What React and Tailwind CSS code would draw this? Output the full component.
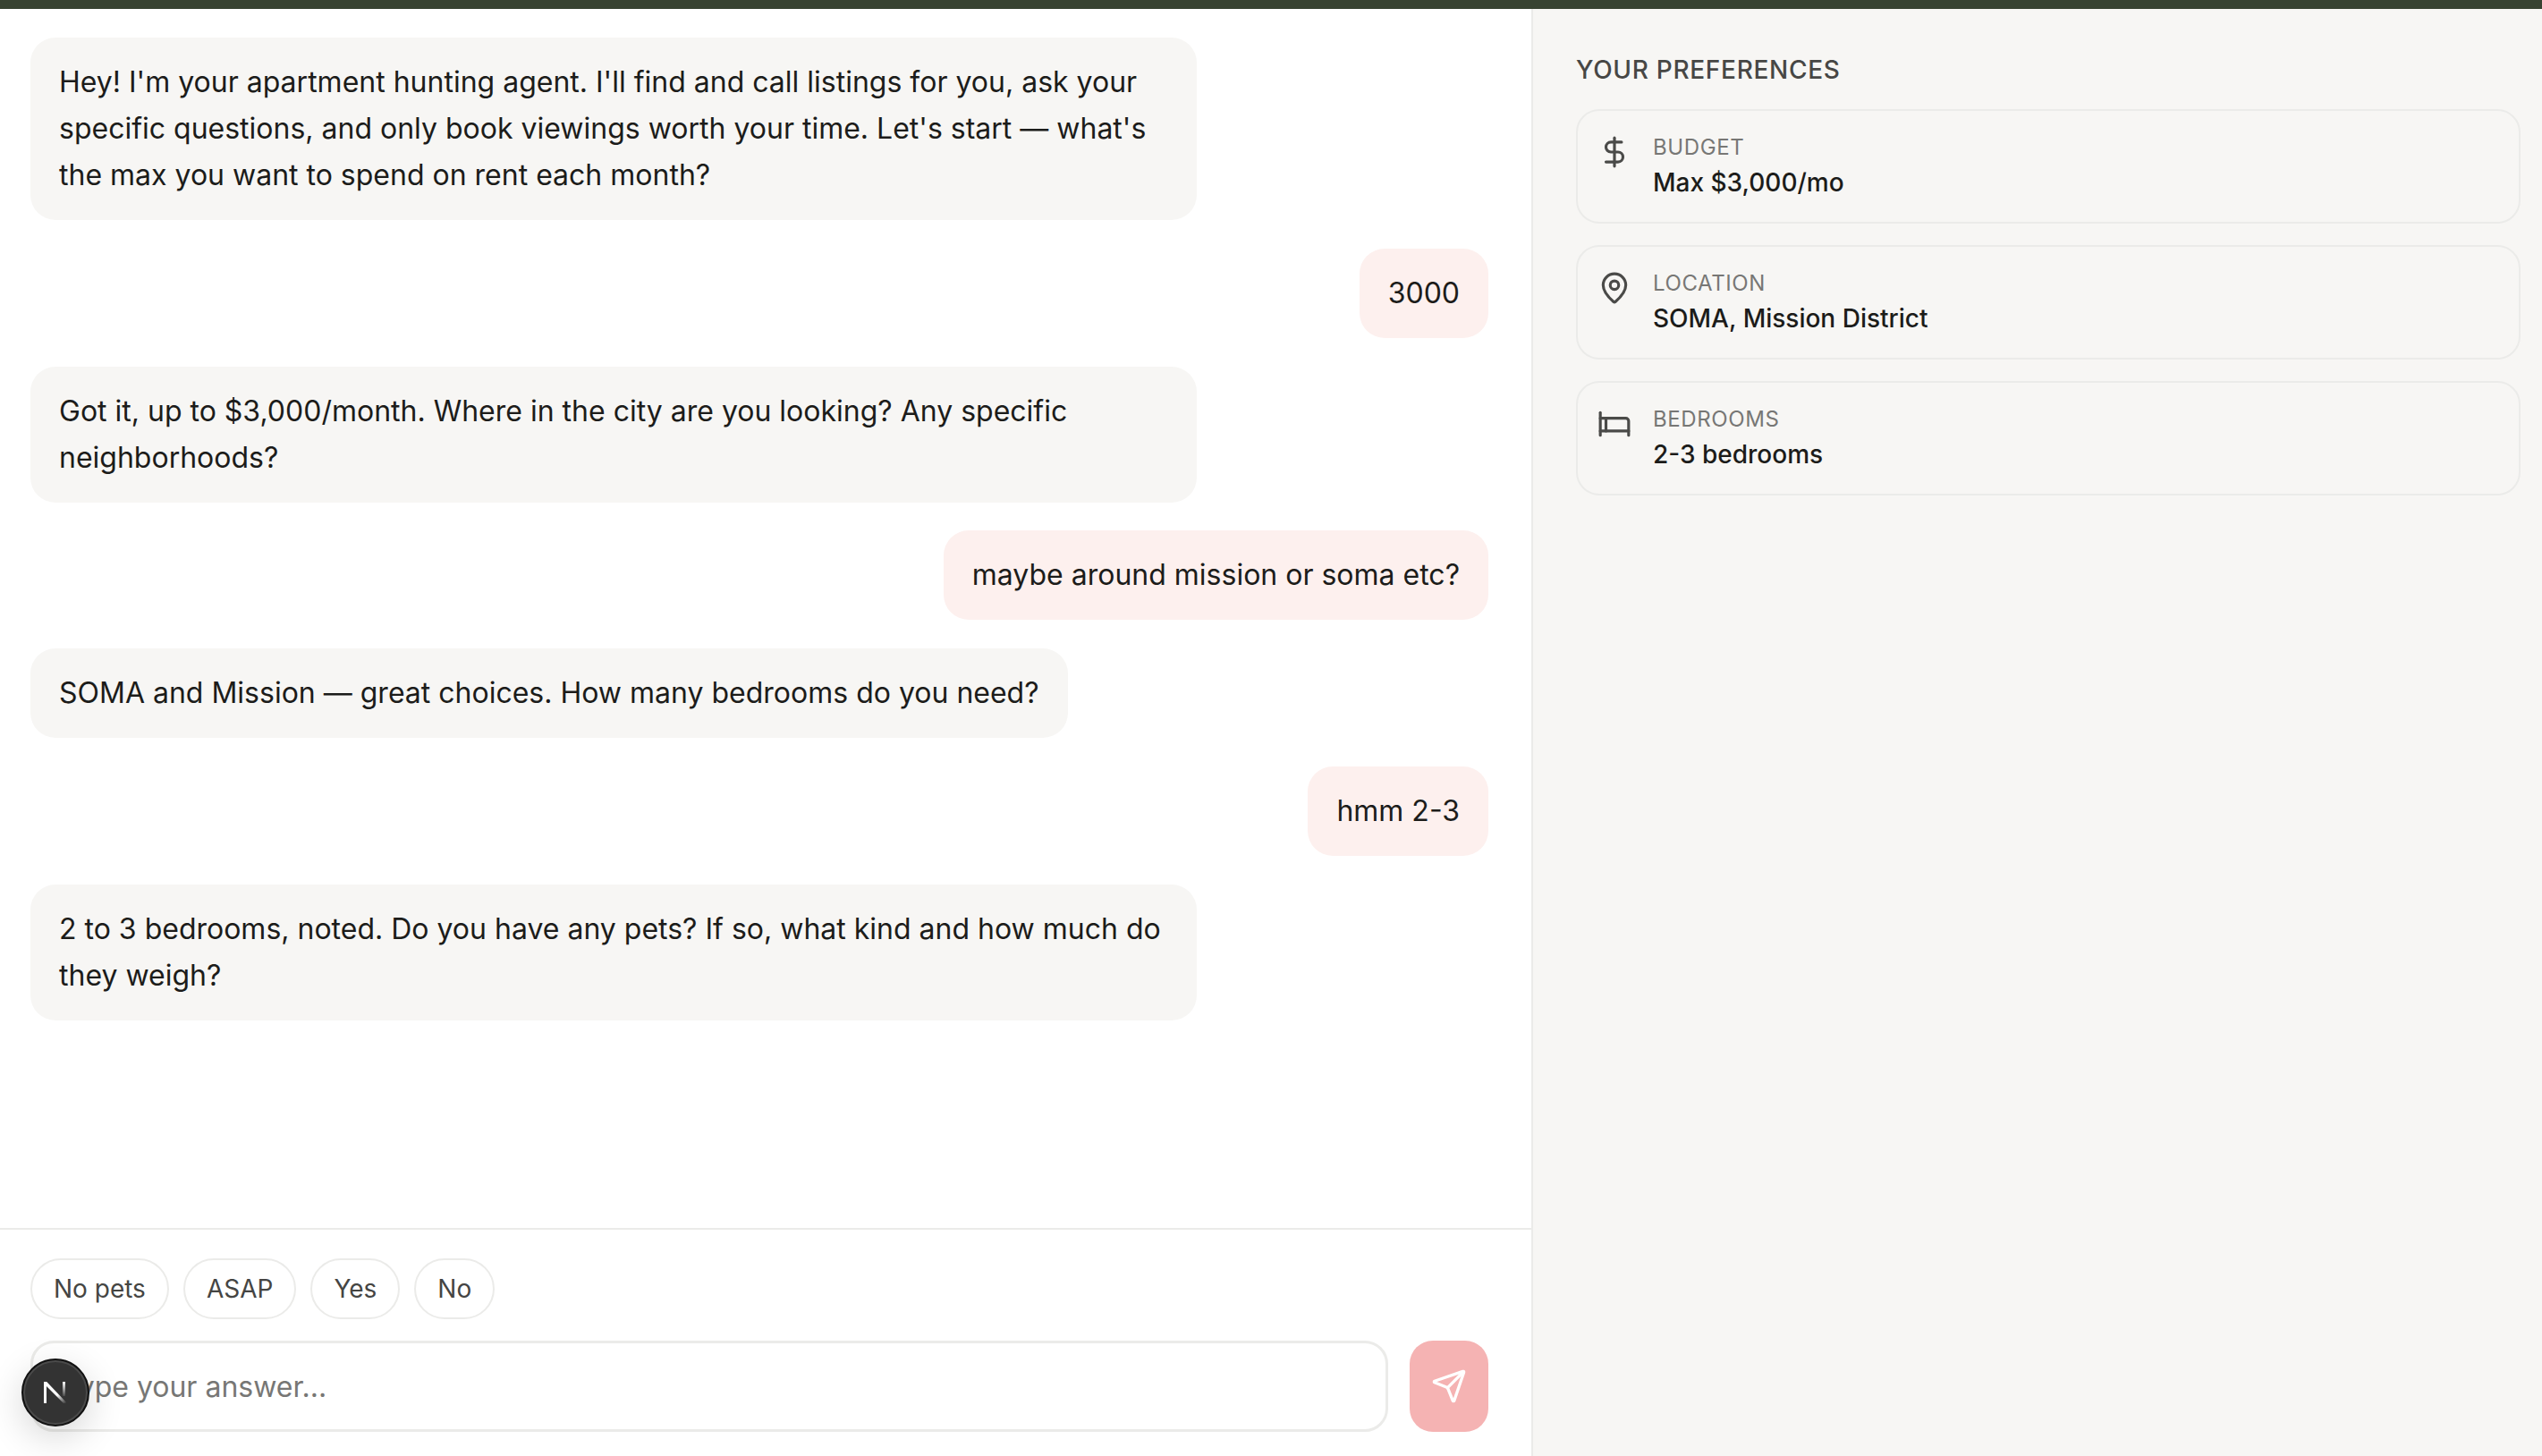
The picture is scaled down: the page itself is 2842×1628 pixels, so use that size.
import { Bed, DollarSign, MapPin, Send } from "lucide-react";

const messages = [
    { from: "agent", text: "Hey! I'm your apartment hunting agent. I'll find and call listings for you, ask your specific questions, and only book viewings worth your time. Let's start — what's the max you want to spend on rent each month?" },
    { from: "user", text: "3000" },
    { from: "agent", text: "Got it, up to $3,000/month. Where in the city are you looking? Any specific neighborhoods?" },
    { from: "user", text: "maybe around mission or soma etc?" },
    { from: "agent", text: "SOMA and Mission — great choices. How many bedrooms do you need?" },
    { from: "user", text: "hmm 2-3" },
    { from: "agent", text: "2 to 3 bedrooms, noted. Do you have any pets? If so, what kind and how much do they weigh?" },
];

const chips = ["No pets", "ASAP", "Yes", "No"];

const preferences = [
    { label: "BUDGET", value: "Max $3,000/mo", Icon: DollarSign },
    { label: "LOCATION", value: "SOMA, Mission District", Icon: MapPin },
    { label: "BEDROOMS", value: "2-3 bedrooms", Icon: Bed },
];

const NextBadge = () => (
    <div className="absolute bottom-[33px] left-[24px] flex h-[76px] w-[76px] items-center justify-center rounded-full border-2 border-[#111] bg-[#333] shadow-[0_12px_40px_rgba(0,0,0,0.16),inset_0_0_0_2px_#4a4a4a]">
        <svg width="26" height="24" viewBox="0 0 26 24" fill="none">
            <defs>
                <linearGradient id="nextDiagonal" x1="6" y1="4" x2="25" y2="24" gradientUnits="userSpaceOnUse">
                    <stop offset="0.5" stopColor="#fff" />
                    <stop offset="1" stopColor="#fff" stopOpacity="0" />
                </linearGradient>
                <linearGradient id="nextStem" x1="22" y1="0" x2="22" y2="16" gradientUnits="userSpaceOnUse">
                    <stop stopColor="#fff" />
                    <stop offset="1" stopColor="#fff" stopOpacity="0.1" />
                </linearGradient>
            </defs>
            <path d="M0 0h3.200L26 24h-4L3 5v19H0z" fill="url(#nextDiagonal)" />
            <rect x="0" y="0" width="3" height="24" fill="#fff" />
            <rect x="21" y="0" width="3" height="16" fill="url(#nextStem)" />
        </svg>
    </div>
);

const App = () => {
    return (
        <div className="flex h-screen flex-col overflow-hidden bg-white font-[Inter,sans-serif] text-[#1c1c1a]">
            <div className="h-[10px] shrink-0 bg-[#384332]" />
            <div className="flex min-h-0 flex-1">
                {/* Chat */}
                <div className="relative flex w-[1714px] shrink-0 flex-col border-r-2 border-[#ebebe9]">
                    <div className="flex min-h-0 flex-1 flex-col gap-[31.750px] pb-[32px] pl-[34px] pr-[48px] pt-[32px]">
                        {messages.map((msg, i) => (
                            <div key={i} className={msg.from === "user" ? "flex justify-end" : "flex justify-start"}>
                                <div className={`max-w-[1304px] rounded-[28px] px-[32px] py-[24px] text-[32px] leading-[52px] ${msg.from === "user" ? "bg-[#fdf0ee]" : "bg-[#f7f6f4]"}`}>
                                    {msg.text}
                                </div>
                            </div>
                        ))}
                    </div>

                    <div className="flex h-[255px] shrink-0 flex-col gap-[24px] border-t-2 border-[#ebebe9] pl-[34px] pr-[48px] pt-[32px]">
                        <div className="flex gap-[16px]">
                            {chips.map((chip) => (
                                <button key={chip} className="flex h-[68px] items-center rounded-full border-2 border-[#ebebe9] px-[24px] text-[28px] text-[#454543]">
                                    {chip}
                                </button>
                            ))}
                        </div>
                        <div className="flex gap-[24px]">
                            <input
                                placeholder="Type your answer..."
                                className="h-[102px] min-w-0 flex-1 rounded-[26px] border-[3px] border-[#ebebe9] px-[32px] text-[32px] outline-none placeholder:text-[#777775]"
                            />
                            <button className="flex h-[102px] w-[88px] items-center justify-center rounded-[26px] bg-[#f5b3b3] text-white">
                                <Send size={40} strokeWidth={2} />
                            </button>
                        </div>
                    </div>
                    <NextBadge />
                </div>

                {/* Preferences */}
                <div className="min-w-0 flex-1 bg-[#f7f6f4] pl-[48px] pr-[24px] pt-[49px]">
                    <h2 className="mb-[25px] text-[28px] font-medium leading-[38px] tracking-[0.7px] text-[#474745]">YOUR PREFERENCES</h2>
                    <div className="flex flex-col gap-[24px]">
                        {preferences.map(({ label, value, Icon }) => (
                            <div key={label} className="flex h-[128px] gap-[24px] rounded-[26px] border-2 border-[#ebebe9] pl-[22px] pr-[22px] pt-[23px]">
                                <Icon size={38} strokeWidth={2} className="mt-[4px] shrink-0 text-[#4a4a48]" />
                                <div>
                                    <div className="text-[24px] leading-[36px] tracking-[0.6px] text-[#777775]">{label}</div>
                                    <div className="text-[28px] font-medium leading-[42px]">{value}</div>
                                </div>
                            </div>
                        ))}
                    </div>
                </div>
            </div>
        </div>
    );
};

export default App;
